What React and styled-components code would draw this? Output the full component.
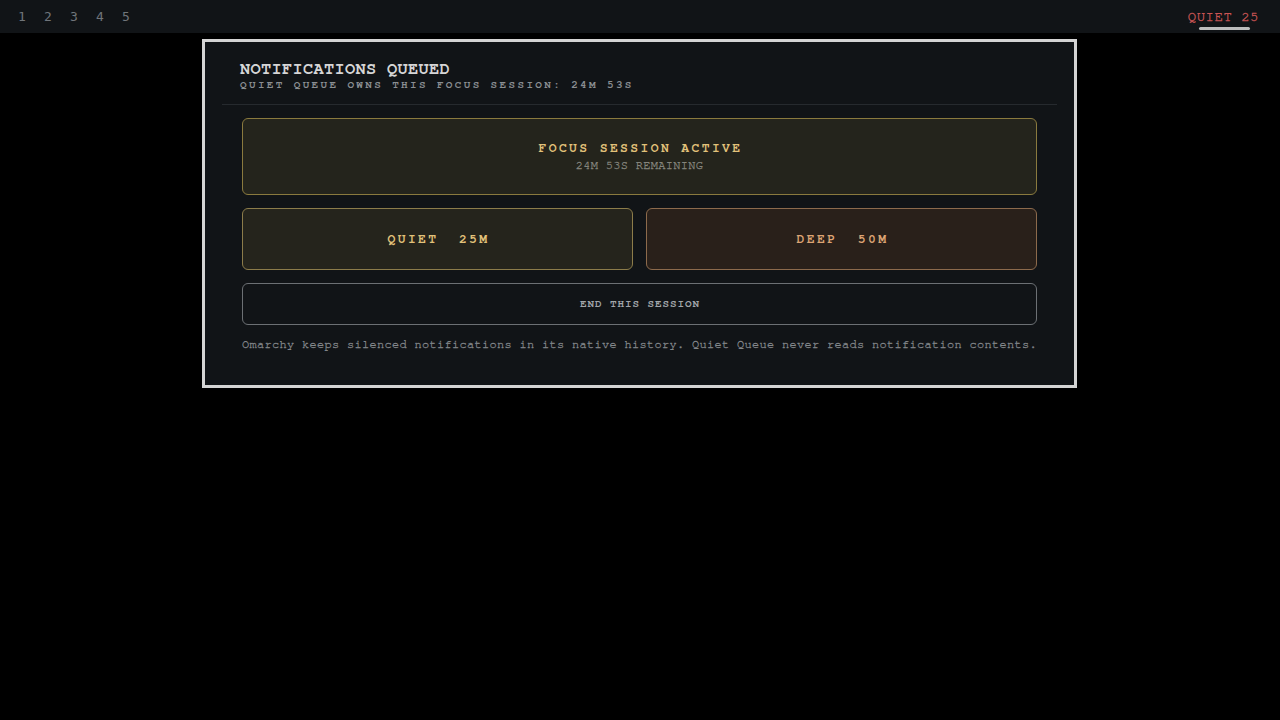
import React from 'react';
import styled, { createGlobalStyle } from 'styled-components';

const GlobalStyle = createGlobalStyle`
  html, body {
    margin: 0;
    padding: 0;
    background: #000;
    height: 100%;
  }
  #root {
    min-height: 100%;
  }
`;

const Page = styled.div`
  width: 1280px;
  height: 720px;
  background: #000;
  display: flex;
  flex-direction: column;
  font-family: 'FreeMono', 'Nimbus Mono PS', 'Nimbus Mono L', 'Liberation Mono', monospace;
`;

const Bar = styled.div`
  height: 33px;
  background: #111417;
  display: flex;
  align-items: center;
  justify-content: space-between;
  padding: 0 21px 0 9px;
`;

const Workspaces = styled.div`
  display: flex;
  align-items: center;
`;

const Workspace = styled.span`
  width: 26px;
  text-align: center;
  font-family: 'DejaVu Sans Mono', monospace;
  font-size: 13px;
  color: #70757a;
`;

const QuietTag = styled.div`
  position: relative;
  font-size: 14px;
  letter-spacing: 0.5px;
  color: #c85454;
  -webkit-text-stroke: 0.35px currentColor;

  &::after {
    content: '';
    position: absolute;
    left: 11px;
    right: 9px;
    bottom: -6px;
    height: 3px;
    border-radius: 2px;
    background: #bdbdbd;
  }
`;

const Stage = styled.div`
  display: flex;
  padding: 6px 0 0 202px;
`;

const Panel = styled.div`
  width: 869px;
  border: 3px solid #d4d4d4;
  background: #111417;
  display: flex;
  flex-direction: column;
`;

const Header = styled.div`
  margin: 0 17px;
  padding: 17px 18px 12px;
  border-bottom: 1px solid #262a2e;
`;

const Title = styled.div`
  font-size: 17px;
  font-weight: bold;
  letter-spacing: 0.3px;
  color: #d6d6d6;
  line-height: 19px;
`;

const Subtitle = styled.div`
  font-size: 11px;
  font-weight: bold;
  letter-spacing: 2.35px;
  color: #8a8e92;
  line-height: 14px;
`;

const Body = styled.div`
  padding: 13px 37px 34px;
  display: flex;
  flex-direction: column;
  gap: 13px;
`;

const StatusCard = styled.div`
  height: 75px;
  border: 1px solid #8a7a3e;
  border-radius: 6px;
  background: #24241c;
  display: flex;
  flex-direction: column;
  align-items: center;
  justify-content: center;
  gap: 1px;
`;

const CardTitle = styled.div`
  font-size: 13px;
  font-weight: bold;
  letter-spacing: 2.4px;
  color: #e2c27a;
  line-height: 16px;
  padding-left: 2px;
`;

const CardSub = styled.div`
  font-size: 12px;
  letter-spacing: 0.3px;
  color: #84847c;
  line-height: 14px;
  -webkit-text-stroke: 0.3px currentColor;
`;

const Row = styled.div`
  display: grid;
  grid-template-columns: 1fr 1fr;
  gap: 13px;
`;

const ModeButton = styled.button`
  height: 62px;
  border-radius: 6px;
  border: 1px solid ${(p) => p.$border};
  background: ${(p) => p.$bg};
  color: ${(p) => p.$color};
  font-family: inherit;
  font-size: 13px;
  font-weight: bold;
  letter-spacing: 2.4px;
  white-space: pre;
  padding: 0 0 0 2px;
  cursor: pointer;
`;

const EndButton = styled.button`
  height: 42px;
  border-radius: 6px;
  border: 1px solid #6c7074;
  background: transparent;
  color: #a2a6aa;
  font-family: inherit;
  font-size: 11px;
  font-weight: bold;
  letter-spacing: 0.9px;
  cursor: pointer;
  padding: 0 0 1px 1px;
`;

const Note = styled.p`
  margin: -1px 0 0;
  font-size: 12px;
  letter-spacing: 0.3px;
  color: #82868a;
  line-height: 14px;
  white-space: nowrap;
  -webkit-text-stroke: 0.3px currentColor;
`;

const modes = [
  { label: 'QUIET  25M', bg: '#25241c', border: '#8c7c4a', color: '#e2c27a' },
  { label: 'DEEP  50M', bg: '#29201a', border: '#8c6a4c', color: '#dca474' },
];

export default function App() {
  const remaining = '24M 53S';
  return (
    <Page>
      <GlobalStyle />
      <Bar>
        <Workspaces>
          {[1, 2, 3, 4, 5].map((n) => (
            <Workspace key={n}>{n}</Workspace>
          ))}
        </Workspaces>
        <QuietTag>QUIET 25</QuietTag>
      </Bar>
      <Stage>
        <Panel>
          <Header>
            <Title>NOTIFICATIONS QUEUED</Title>
            <Subtitle>QUIET QUEUE OWNS THIS FOCUS SESSION: {remaining}</Subtitle>
          </Header>
          <Body>
            <StatusCard>
              <CardTitle>FOCUS SESSION ACTIVE</CardTitle>
              <CardSub>{remaining} REMAINING</CardSub>
            </StatusCard>
            <Row>
              {modes.map((m) => (
                <ModeButton key={m.label} $bg={m.bg} $border={m.border} $color={m.color}>
                  {m.label}
                </ModeButton>
              ))}
            </Row>
            <EndButton>END THIS SESSION</EndButton>
            <Note>
              Omarchy keeps silenced notifications in its native history. Quiet Queue never reads notification contents.
            </Note>
          </Body>
        </Panel>
      </Stage>
    </Page>
  );
}
